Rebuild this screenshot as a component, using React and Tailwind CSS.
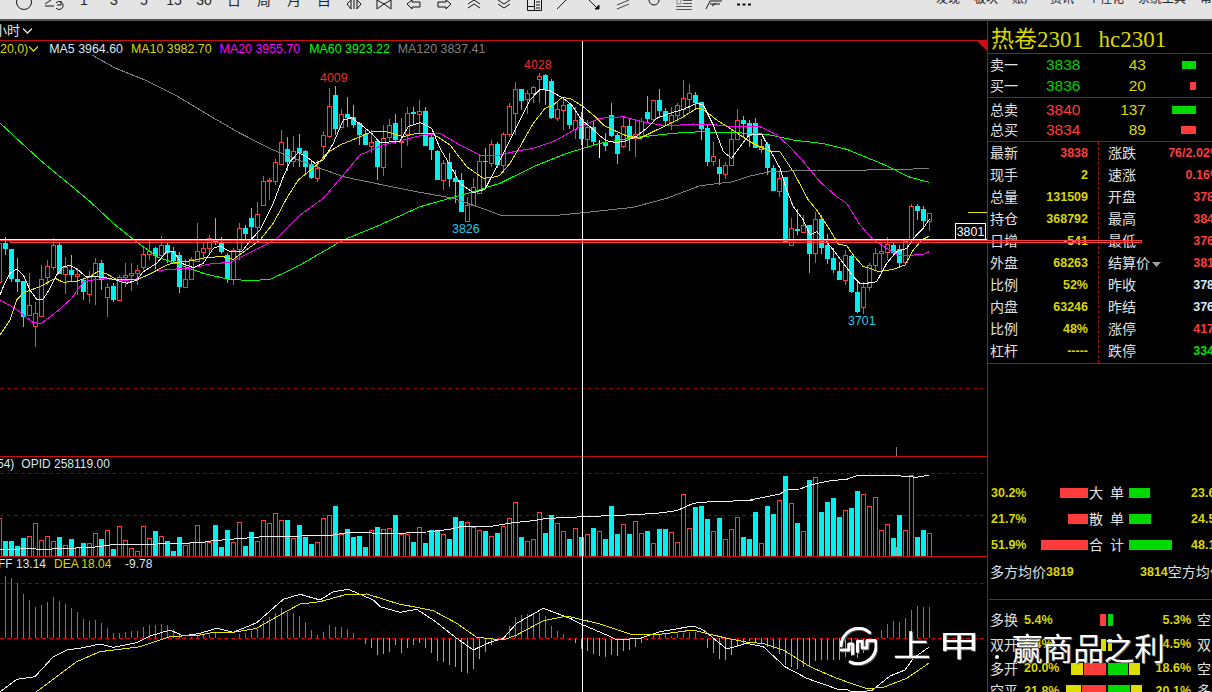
import React from "react";

const RED = "#ff3c3c";
const CY = "#00f0f0";
const conv = (ox, oy, a) => a.map(([x, y]) => [ox + x / 3, oy + y / 3]);
const pts = (a) => a.map(([x, y]) => x.toFixed(1) + "," + y.toFixed(1)).join(" ");

const candleRows = (start, oy, rows) =>
  rows.map((r, k) => ({ i: start + k, t: r[0], hi: Math.round(oy + r[1] / 3), top: Math.round(oy + r[2] / 3), bot: Math.round(oy + r[3] / 3), lo: Math.round(oy + r[4] / 3) }));

const candles = [
  ...candleRows(-1, 200, [["r",120,130,245,245],["c",112,130,148,165],["c",147,147,237,245],["c",175,237,245,275],["c",243,243,350,380],["r",220,316,345,345],["r",305,340,378,440],["r",195,238,347,347],["r",180,199,230,255],["r",115,136,200,210],["c",128,135,222,222],["r",170,200,222,282],["c",165,210,225,245],["r",205,222,228,285],["c",235,240,275,300],["r",212,232,281,310],["r",175,190,228,315],["c",180,189,240,270],["r",250,262,290,352],["c",250,258,300,306],["r",225,232,300,300],["r",190,226,232,260],["r",190,220,225,272],["r",195,211,220,255],["r",140,162,200,210],["r",122,153,163,180],["c",140,144,168,208],["r",108,136,165,178],["c",125,135,158,188],["c",140,153,183,190],["c",155,165,261,278],["r",178,238,261,261],["r",170,176,238,238],["r",70,154,183,183],["r",125,145,155,180],["r",105,115,143,165],["c",55,122,125,135],["c",112,125,155,162],["c",160,165,237,248],["r",145,150,237,255],["r",70,85,148,180]]),
  ...candleRows(40, 70, [["c",465,473,492,510],["c",415,445,472,510],["r",395,433,470,510],["r",318,333,404,404],["r",323,330,334,390],["r",268,276,332,345],["r",180,217,281,281],["c",200,237,275,303],["r",198,244,272,290],["c",192,234,248,290],["c",240,243,290,310],["c",270,283,325,327],["r",270,293,323,335],["r",182,195,227,268],["r",55,108,197,203],["c",48,75,178,195],["r",118,133,171,175],["c",82,132,143,170],["c",105,141,164,175],["c",155,158,194,225],["c",180,192,224,225],["r",180,217,227,250],["c",210,213,290,330],["r",165,203,292,318],["r",148,165,200,215],["c",132,159,210,222],["r",145,212,216,295],["r",110,130,192,228],["c",110,126,131,165],["r",90,124,131,190],["c",110,124,228,228],["c",195,200,240,270],["c",240,243,330,330],["r",270,280,330,360],["c",250,276,327,350],["c",300,324,335,400],["c",310,331,425,425],["r",380,404,452,455],["r",325,350,404,404],["r",255,274,368,372],["c",235,273,277,350],["r",210,222,278,290],["c",215,222,285,295]]),
  ...candleRows(83, 70, [["r",185,193,285,310],["r",100,108,193,200],["r",37,58,128,195],["c",57,57,92,120],["r",60,70,86,132],["r",48,52,68,100],["r",10,19,26,100],["c",12,15,60,105],["c",28,33,144,146],["r",95,118,143,152],["r",82,106,119,180],["c",100,102,164,176],["r",110,151,177,207],["c",125,148,207,225],["r",150,171,208,230],["c",150,172,217,225],["w",210,216,218,265],["c",190,218,227,243],["c",100,136,197,200],["c",190,196,251,282],["r",140,169,228,235],["c",145,169,204,242],["r",150,193,204,260],["r",145,152,197,209],["c",78,126,148,155],["r",90,91,148,155],["c",57,91,123,145],["c",115,124,152,165],["r",110,136,156,180],["r",100,104,135,155],["r",30,85,118,145],["r",42,70,86,130],["c",65,75,99,115],["c",95,97,176,210],["c",165,175,275,288],["r",215,259,272,288],["c",268,291,312,345],["r",275,286,311,326],["r",180,208,284,284],["r",118,151,208,210],["c",138,150,162,200],["c",150,159,197,230]]),
  ...candleRows(125, 100, [["c",55,70,144,145],["o",118,139,146,160],["c",125,132,204,225],["c",195,204,273,273],["r",210,235,272,290],["c",232,232,425,428],["r",355,385,434,438],["c",328,388,392,405],["r",345,376,395,395],["c",375,375,461,520],["r",335,357,460,488],["c",345,357,444,462],["c",402,435,476,492],["c",445,474,510,520],["c",487,513,540,540],["r",450,466,540,555],["c",465,468,576,580],["c",545,576,636,640],["r",545,562,622,642],["r",490,496,560,572],["r",445,460,494,510],["r",430,454,460,515],["r",410,433,455,480],["c",425,435,458,465],["c",435,448,488,505],["r",420,422,487,495],["r",312,319,420,420],["c",312,319,332,360],["c",318,327,362,385],["r",338,338,362,392]]),
];

const lines = {
  white: [...conv(0,200,[[0,285],[10,260],[30,220],[50,207],[70,225],[90,270],[110,298],[130,297],[150,265],[170,225],[190,200],[210,196],[235,210],[255,228],[310,232],[340,238],[380,250],[410,240],[430,215],[470,190],[500,155],[520,155],[545,190],[580,203],[610,190],[640,145],[660,138],[690,155],[725,155]]),
    ...conv(240,70,[[32,510],[60,480],[100,400],[130,320],[150,275],[175,248],[200,260],[225,280],[250,270],[280,220],[310,150],[335,143],[370,170],[395,190],[420,218],[460,215],[480,213],[505,170],[540,158],[575,175],[600,235],[630,285],[660,340],[700,368],[735,358],[770,290]]),
    ...conv(500,70,[[0,270],[30,210],[60,150],[90,90],[120,58],[150,62],[190,85],[215,105],[245,150],[270,170],[300,198],[320,212],[350,218],[380,212],[410,198],[440,175],[470,145],[510,130],[550,118],[590,100],[610,105],[640,165],[670,245],[695,265],[720,230]]),
    ...conv(750,100,[[0,102],[35,102],[60,150],[90,205],[110,270],[130,320],[160,360],[180,405],[200,395],[225,420],[250,450],[280,490],[310,530],[330,550],[350,550],[380,545],[410,490],[440,455],[470,445],[495,410],[520,385],[538,358]])],
  yellow: [...conv(0,200,[[0,405],[30,360],[50,300],[70,278],[120,260],[165,235],[190,247],[230,244],[270,230],[295,213],[320,222],[350,238],[415,238],[450,222],[500,195],[530,187],[575,182],[620,172],[670,170],[700,178]]),
    ...conv(240,70,[[60,510],[100,460],[140,385],[175,330],[230,285],[260,250],[300,225],[360,200],[395,185],[435,184],[490,200],[530,190],[580,192],[630,225],[680,290],[730,325],[770,320]]),
    ...conv(500,70,[[0,315],[30,280],[60,230],[100,160],[135,115],[160,105],[185,83],[210,85],[250,110],[280,135],[310,165],[340,180],[380,198],[420,205],[450,190],[500,165],[550,140],[590,115],[610,118],[650,150],[690,175]]),
    ...conv(750,100,[[0,125],[30,140],[60,155],[90,155],[130,215],[175,300],[200,330],[240,390],[265,432],[290,437],[310,465],[340,500],[360,505],[385,515],[430,508],[465,495],[490,450],[515,420],[538,408]])],
  magenta: [...conv(0,200,[[0,300],[45,325],[100,368],[125,370],[170,335],[215,295],[250,245],[310,235],[370,243],[420,235],[465,213],[510,208],[570,205],[640,190],[690,188]]),
    ...conv(240,70,[[105,510],[180,435],[250,385],[310,315],[360,255],[430,225],[490,210],[550,195],[600,190],[660,225],[720,255]]),
    ...conv(500,70,[[0,255],[50,243],[100,235],[160,215],[240,170],[300,145],[370,140],[440,158],[500,168],[580,162],[650,165],[700,170]]),
    ...conv(750,100,[[0,78],[30,80],[80,105],[120,140],[160,185],[210,245],[260,290],[290,310],[330,375],[370,420],[410,445],[450,468],[520,463],[538,455]])],
  green: [[0,123],[40,160],...conv(0,200,[[265,0],[340,70],[400,118],[470,170],[540,195],[610,220],[680,237],[750,242],[810,238],[850,220],[900,195]]),
    ...conv(240,70,[[310,510],[420,465],[540,410],[700,365]]),
    ...conv(500,70,[[0,340],[100,290],[200,250],[300,220],[400,203],[520,190],[600,185],[700,188]]),
    ...conv(750,100,[[0,100],[50,103],[130,120],[220,131],[290,148],[400,193],[480,232],[538,247]])],
  gray: [[92,55],[115,68],[145,80],[175,95],[217,120],...conv(240,70,[[0,190],[100,240],[200,280],[310,320],[430,345],[530,365],[640,385],[740,420]]),
    ...conv(500,70,[[0,435],[180,435],[250,428],[400,412],[500,385],[600,347],[700,335]]),
    ...conv(750,100,[[0,228],[60,215],[200,210],[350,210],[470,208],[538,205]])],
};

const vol = [["r",205],["c",273],["c",273],["c",288],["c",264],["r",258],["r",220],["r",270],["r",258],["r",273],["c",261],["r",286],["c",267],["r",291],["c",279],["r",279],["r",250],["c",267],["r",240],["c",297],["r",228],["r",270],["r",294],["r",303],["r",228],["r",264],["c",243],["r",258],["c",273],["c",303],["c",261],["r",285],["r",276],["r",225],["r",277],["r",277],["c",225],["c",291],["c",240],["r",276],["r",216],["c",288],["c",246],["r",273],["r",210],["r",219],["r",189],["r",210],["c",210],["r",264],["c",225],["c",261],["c",282],["r",276],["r",204],["r",195],["c",168],["r",252],["c",237],["c",261],["c",258],["c",291],["r",240],["c",231],["r",237],["r",234],["c",195],
  ["r",252],["r",252],["c",276],["r",232],["c",279],["c",240],["c",240],["r",252],["c",267],["c",201],["c",213],["r",216],["r",232],["r",240],["c",243],["r",258],["c",249],["r",228],["r",204],["r",156],["c",261],["r",273],["r",267],["r",186],["c",249],["c",195],["r",219],["r",243],["c",267],["r",234],["c",261],["r",252],["c",234],["r",243],["c",267],["c",168],["c",252],["r",222],["c",252],["r",213],["r",249],["c",243],["r",279],["c",237],["c",237],["r",246],["r",276],["r",132],["r",234],["c",171],["c",168],["c",207],["r",243],["c",204],["r",267],["r",237],["r",201],["c",261],["c",267],
  ["c",186],["r",279],["c",168],["c",192],["r",150],["c",78],["r",159],["c",219],["r",243],["c",90],["r",81],["c",186],["c",156],["c",144],["c",201],["r",180],["c",174],["c",123],["r",132],["r",168],["r",141],["r",240],["r",222],["c",264],["c",195],["r",240],["r",75],["c",261],["c",240],["r",249]];

const macdY = [378,384,400,432,450,471,465,456,441,453,462,474,486,507,513,510,519,534,549,549,546,543,543,531,525,525,522,525,537,549,560,560,555,555,555,550,565,568,565,552,549,543,537,513,501,489,474,486,489,498,516,540,555,546,525,531,531,537,549,565,582,594,615,612,606,585,
  609,594,585,579,594,609,633,636,645,651,666,669,657,627,606,585,568,565,528,501,495,492,489,489,498,528,543,552,570,579,597,603,612,618,621,615,618,603,600,591,579,570,555,552,552,558,552,548,545,545,563,594,609,627,630,615,591,582,573,
  576,580,590,597,612,645,651,657,651,651,633,630,630,630,630,620,618,624,608,585,570,540,522,513,516,504,480,468,471,471];

const volLine = [...conv(0,450,[[0,300],[80,296],[135,298],[280,292],[330,285],[470,282],[600,278],[640,272],[740,264],[790,260],[900,258],[1000,255],[1040,248],[1190,250]]),
  ...conv(400,450,[[0,250],[80,246],[150,238],[180,230],[280,228],[340,218],[400,212],[430,207],[480,203],[700,194],[770,190],[830,182],[880,160],[920,156],[1000,153],[1060,150]]),
  ...conv(750,450,[[0,150],[50,140],[90,132],[110,118],[150,117],[180,105],[240,92],[290,88],[320,77],[440,77],[500,82],[536,76]])];
const diff = [...conv(0,450,[[0,726],[50,688],[105,680],[160,620],[200,600],[240,595],[300,582],[340,592],[410,578],[450,558],[510,540],[550,558],[600,550],[650,535],[700,547],[770,518],[850,448],[900,433],[960,450],[1000,425],[1045,418],[1120,450],[1140,470]]),
  ...conv(400,450,[[0,487],[50,478],[100,510],[170,565],[220,600],[270,577],[310,565],[350,520],[430,475],[470,490],[510,505],[550,525],[620,555],[650,570],[720,565],[780,545],[880,528],[910,540],[980,597],[1040,580]]),
  ...conv(750,450,[[0,582],[40,590],[105,650],[170,685],[270,720],[290,718],[305,726],[365,722],[420,678],[465,660],[490,625],[536,592]])];
const dea = [...conv(0,450,[[108,726],[170,680],[230,635],[300,605],[420,590],[510,560],[600,555],[640,547],[700,547],[770,535],[830,500],[900,462],[960,455],[1040,433],[1100,432]]),
  ...conv(400,450,[[0,463],[50,472],[100,482],[170,520],[230,562],[310,570],[350,555],[430,512],[500,498],[600,522],[700,555],[780,553],[880,540],[980,565]]),
  ...conv(750,450,[[0,578],[40,580],[100,600],[180,650],[260,685],[350,716],[400,712],[470,685],[536,640]])];

const Dash = ({ y }) => <line x1="0" x2="987" y1={y} y2={y} stroke="#8c0000" strokeDasharray="4 3" shapeRendering="crispEdges" />;

function MainChart() {
  return (
    <svg className="block w-[987px] h-[415px]" viewBox="0 41 987 415">
      <g shapeRendering="crispEdges">
        <Dash y={388.5} />
        {candles.map((c) => {
          const x = 5.5 + 6 * c.i;
          if (c.t === "w") return <line key={c.i} x1={x} x2={x} y1={c.hi} y2={c.lo} stroke="#fff" />;
          const col = c.t === "c" ? CY : c.t === "o" ? "#ff8a00" : RED;
          return (
            <g key={c.i}>
              <line x1={x} x2={x} y1={c.hi} y2={c.lo} stroke={col} />
              {c.t === "c" ? (
                <rect x={x - 2.5} y={c.top} width="5" height={Math.max(1, c.bot - c.top)} fill={col} />
              ) : (
                <rect x={x - 2} y={c.top + 0.5} width="4" height={Math.max(1, c.bot - c.top)} fill="#000" stroke={col} />
              )}
            </g>
          );
        })}
      </g>
      <g fill="none" strokeWidth="1" shapeRendering="crispEdges">
        <polyline points={pts(lines.gray)} stroke="#808080" />
        <polyline points={pts(lines.green)} stroke="#00ff00" />
        <polyline points={pts(lines.magenta)} stroke="#ff00ff" />
        <polyline points={pts(lines.yellow)} stroke="#e6e600" />
        <polyline points={pts(lines.white)} stroke="#f0f0f0" />
      </g>
      <line x1="968" x2="987" y1="212.5" y2="212.5" stroke="#e6e600" shapeRendering="crispEdges" />
      <polygon points="977,41 987,41 987,51" fill="#c81010" />
      <line x1="896.5" x2="896.5" y1="447" y2="456" stroke="#808080" shapeRendering="crispEdges" />
    </svg>
  );
}

function VolChart() {
  const b = 556;
  return (
    <svg className="block w-[987px] h-[99px]" viewBox="0 457 987 99">
      <g shapeRendering="crispEdges">
        <Dash y={473.5} />
        <Dash y={515.5} />
        {vol.map((v, k) => {
          const x = 5.5 + 6 * (k - 1);
          const top = Math.round(450 + v[1] / 3);
          return v[0] === "c" ? (
            <rect key={k} x={x - 2.5} y={top} width="5" height={b - top} fill={CY} />
          ) : (
            <rect key={k} x={x - 2} y={top + 0.5} width="4" height={b - top} fill="#000" stroke={RED} />
          );
        })}
        <line x1="896.5" x2="896.5" y1="547" y2="556" stroke="#a0a0a0" />
      </g>
      <polyline points={pts(volLine)} fill="none" stroke="#f0f0f0" strokeWidth="1" shapeRendering="crispEdges" />
    </svg>
  );
}

function MacdChart() {
  const z = 638;
  return (
    <svg className="block w-[987px] h-[135px]" viewBox="0 557 987 135">
      <g shapeRendering="crispEdges">
        <Dash y={583.5} />
        {macdY.map((Y, k) => {
          const x = 5.5 + 6 * k;
          const y = Math.round(450 + Y / 3);
          const up = y <= z;
          return <line key={k} x1={x} x2={x} y1={z} y2={y} stroke={up ? RED : "#00e6f0"} />;
        })}
        <line x1="0" x2="987" y1={z + 0.5} y2={z + 0.5} stroke="#e00000" strokeDasharray="4 3" />
      </g>
      <polyline points={pts(diff)} fill="none" stroke="#f0f0f0" strokeWidth="1" shapeRendering="crispEdges" />
      <polyline points={pts(dea)} fill="none" stroke="#e6e600" strokeWidth="1" shapeRendering="crispEdges" />
    </svg>
  );
}

const Ico = ({ children }) => (
  <svg width="24" height="19" viewBox="0 0 24 19" fill="none" stroke="#111" strokeWidth="1">{children}</svg>
);
const T = ({ c }) => <span className="block -mt-[9px] text-[14px] leading-[19px] text-[#222]">{c}</span>;

const tools = [
  <Ico><path d="M13 0V5H16" /></Ico>,
  <Ico><circle cx="12" cy="2" r="7.5" /></Ico>,
  <Ico><path d="M3 4L9 0M3 6H12M14 3A4 4 0 1 1 14 8M19 1V5H15" /></Ico>,
  <T c="1" />, <T c="3" />, <T c="5" />, <T c="15" />, <T c="30" />, <T c="日" />, <T c="周" />, <T c="月" />, <T c="目" />,
  <Ico><path d="M9 0L5 4L9 9V0ZM15 0L19 4L15 9V0ZM12 0V9" /></Ico>,
  <Ico><path d="M5 0V9L12 4L19 9V0L12 4L5 0Z" /></Ico>,
  <Ico><path d="M5 4L10 0V2H18V7H10V9L5 4Z" /></Ico>,
  <Ico><path d="M19 4L14 0V2H6V7H14V9L19 4Z" /></Ico>,
  <Ico><path d="M6 4L12 0L18 4M6 8L12 4L18 8" /></Ico>,
  <Ico><path d="M6 0L12 4L18 0M6 4L12 8L18 4" /></Ico>,
  <Ico><path d="M5.5 0V10.5H19.5V0M12.5 0V10M5.5 6.5H12M14 2H18M14 5H18M14 8H18" /></Ico>,
  <Ico><path d="M5 9L14 0" /></Ico>,
  <Ico><path d="M7 0L15 8" /><path d="M13 9H17V5Z" fill="#111" /></Ico>,
  <Ico><path d="M5 5L17 0M5 9L17 4" stroke="#444" /></Ico>,
  <Ico><path d="M7 0A5 5 0 0 0 17 0" /></Ico>,
  <Ico><path d="M4 6.5H20M4 9.5H20M11 3.5H20M11 0.5H20" stroke="#555" /><path d="M9 0V4H5V0" stroke="#888" /></Ico>,
  <Ico><path d="M4 9L8 1H20M8 4H18M10 6L14 3" /></Ico>,
  <Ico><path d="M5 4.5H8M10.5 4.5H13.5M16 4.5H19" strokeWidth="2" /></Ico>,
];

const menu = ["发现", "板块", "账户", "资讯", "个性化", "系统工具", "帮助"];

function Toolbar() {
  return (
    <div className="h-[21px] flex-none bg-[#e4e4e4] border-b-2 border-[#555555] flex justify-between overflow-hidden">
      <div className="flex -ml-[21px]">
        {tools.map((t, k) => (
          <div key={k} className="w-[30px] flex justify-center items-start">{t}</div>
        ))}
      </div>
      <div className="flex gap-[14px] -mt-[9px] -mr-[12px] text-[12px] leading-[17px] text-[#222] items-start">
        {menu.map((m) => <span key={m}>{m}</span>)}
      </div>
    </div>
  );
}

const Y = "text-[#d8d800]";
const Lab = ({ children, className = "" }) => <span className={"text-[14px] leading-none text-[#e0e0e0] " + className}>{children}</span>;

function Book({ label, price, priceCol, qty, bar, barCol, h }) {
  return (
    <div className={"flex items-center relative " + h}>
      <div className="w-[58px] pl-[2px] flex-none"><Lab>{label}</Lab></div>
      <div className="w-[36px] flex-none text-[15.5px] leading-none" style={{ color: priceCol }}>{price}</div>
      <div className={"w-[64px] flex-none text-right text-[15.5px] leading-none " + Y}>{qty}</div>
      <div className="w-[50px] flex-none flex justify-end">
        <div className="h-[8px]" style={{ width: bar, background: barCol }} />
      </div>
    </div>
  );
}

const R = "text-[#ff3c3c]";
const W = "text-[#d8e8f4]";
const leftRows = [["最新","3838",R],["现手","2",Y],["总量","131509",Y],["持仓","368792",Y],["日增","-541",Y],["外盘","68263",Y],["比例","52%",Y],["内盘","63246",Y],["比例","48%",Y],["杠杆","-----",Y]];
const rightRows = [["涨跌","76/2.02%",R],["速涨","0.16%",R],["开盘","3782",R],["最高","3842",R],["最低","3762",R],["结算价","3812",R],["昨收","3782",W],["昨结","3762",W],["涨停","4172",R],["跌停","3342","text-[#00e000]"]];

function Stat({ label, value, col, extra }) {
  return (
    <div className="h-[22px] flex items-center justify-between">
      <div className="flex items-center">
        <Lab>{label}</Lab>
        {extra}
      </div>
      <span className={"font-bold text-[12.5px] leading-none " + col}>{value}</span>
    </div>
  );
}

function Flow({ l, lw, lbl, rw, r }) {
  return (
    <div className="h-[26px] flex items-center">
      <div className={"w-[50px] pl-[2px] flex-none font-bold text-[12.5px] " + Y}>{l}</div>
      <div className="w-[49px] flex-none flex justify-end"><div className="h-[10px] bg-[#ff3c3c]" style={{ width: lw }} /></div>
      <div className="w-[41px] flex-none pl-[1px] pr-[5px] flex justify-between"><Lab>{lbl[0]}</Lab><Lab>{lbl[1]}</Lab></div>
      <div className="w-[62px] flex-none"><div className="h-[10px] bg-[#00d900]" style={{ width: rw }} /></div>
      <div className={"font-bold text-[12.5px] flex-none " + Y}>{r}</div>
    </div>
  );
}

const Bars = ({ segs, className }) => (
  <div className={"flex gap-[1px] h-[12px] flex-none w-[43px] " + className}>
    {segs.map((s, k) => <div key={k} className="h-full flex-none" style={{ width: s[0], background: s[1] }} />)}
  </div>
);

function Ratio({ a, pa, left, right, pb, b, h }) {
  return (
    <div className={"flex items-center " + h}>
      <div className="w-[36px] pl-[2px] flex-none"><Lab>{a}</Lab></div>
      <div className={"w-[40px] flex-none font-bold text-[12.5px] whitespace-nowrap " + Y}>{pa}</div>
      <Bars segs={left} className="justify-end pr-[1px]" />
      <Bars segs={right} className="pl-[1px]" />
      <div className={"w-[41px] flex-none text-right font-bold text-[12.5px] " + Y}>{pb}</div>
      <div className="pl-[6px] flex-none"><Lab>{b}</Lab></div>
    </div>
  );
}

const Rd = "#ff3c3c", Gn = "#00d900", Yl = "#dddd00";

function Panel() {
  return (
    <div className="w-[225px] flex-none border-l border-[#b81010] overflow-hidden">
      <div className="h-[33px] border-b border-[#a81010] flex items-center pl-[3px] pt-[5px] whitespace-pre font-['Liberation_Serif','Noto_Sans_CJK_SC',serif] text-[23px] leading-none text-[#d8d800]">
        <span className="mr-[4px]">热卷2301  </span><span>hc2301</span>
      </div>
      <div className="h-[44px] border-b border-[#a81010]">
        <Book label="卖一" price="3838" priceCol="#00d000" qty="43" bar={14} barCol={Gn} h="h-[22px]" />
        <Book label="买一" price="3836" priceCol="#00d000" qty="20" bar={6} barCol={Rd} h="h-[20px]" />
      </div>
      <div className="h-[44px] border-b border-[#a81010]">
        <Book label="总卖" price="3840" priceCol="#ff3c3c" qty="137" bar={24} barCol={Gn} h="h-[23px]" />
        <Book label="总买" price="3834" priceCol="#ff3c3c" qty="89" bar={15} barCol={Rd} h="h-[18px]" />
      </div>
      <div className="h-[222px] border-b border-[#a81010] flex">
        <div className="w-[111px] flex-none pl-[2px] pr-[10px] border-r border-dashed border-[#a81010]">
          {leftRows.map((r, k) => <Stat key={k} label={r[0]} value={r[1]} col={r[2]} />)}
        </div>
        <div className="w-[122px] flex-none pl-[9px]">
          {rightRows.map((r, k) => (
            <Stat key={k} label={r[0]} value={r[1]} col={r[2]}
              extra={k === 5 ? <svg width="9" height="5" viewBox="0 0 9 5" className="ml-[2px] mt-[3px]"><path d="M0 0H9L4.5 5Z" fill="#a0a0a0" /></svg> : null} />
          ))}
        </div>
      </div>
      <div className="h-[236px] border-b border-[#a81010] ml-[1px] pt-[116px]">
        <Flow l="30.2%" lw={28} lbl={["大", "单"]} rw={21} r="23.6%" />
        <Flow l="21.7%" lw={20} lbl={["散", "单"]} rw={22} r="24.5%" />
        <Flow l="51.9%" lw={47} lbl={["合", "计"]} rw={43} r="48.1%" />
        <div className="h-[26px] flex items-center pl-[1px] pt-[2px] whitespace-nowrap">
          <Lab>多方均价</Lab>
          <span className={"w-[94px] flex-none font-bold text-[12.5px] " + Y}>3819</span>
          <span className={"font-bold text-[12.5px] " + Y}>3814</span>
          <Lab>空方均价</Lab>
        </div>
      </div>
      <div className="pt-[8px]">
        <Ratio a="多换" pa="5.4%" left={[[6, Rd]]} right={[[5, Gn]]} pb="5.3%" b="空" h="h-[24px]" />
        <Ratio a="双开" pa="6.4%" left={[[5, Yl]]} right={[[4, Yl]]} pb="4.5%" b="双" h="h-[25px]" />
        <Ratio a="多开" pa="20.0%" left={[[12, Yl], [22, Rd]]} right={[[20, Gn], [11, Yl]]} pb="18.6%" b="空" h="h-[23px]" />
        <Ratio a="空平" pa="21.8%" left={[[15, Yl], [24, Rd]]} right={[[22, Gn], [11, Yl]]} pb="20.1%" b="多" h="h-[22px]" />
      </div>
    </div>
  );
}

function Logo() {
  return (
    <svg width="37" height="38" viewBox="0 0 110 112" fill="none" stroke="#fff" strokeWidth="9" strokeLinecap="round" strokeLinejoin="round">
      <path d="M3 55A54 54 0 0 1 55 3C68 3 78 7 88 16" />
      <path d="M107 42V62A54 54 0 0 1 30 103" />
      <path d="M3 68H26V50H38V78" />
      <path d="M52 72V42H66V62H80V40H104" />
    </svg>
  );
}

export default function App() {
  return (
    <div className="relative w-[1212px] h-[692px] overflow-hidden bg-black flex flex-col font-['Liberation_Sans','Noto_Sans_CJK_SC',sans-serif]">
      <Toolbar />
      <div className="flex flex-1 min-h-0">
        <div className="w-[987px] flex-none flex flex-col relative">
          <div className="h-[20px] flex-none border-b border-[#c81010] flex items-center text-[13px] text-[#e8e8e8] -ml-[6px]">
            <span>小时</span>
            <svg width="9" height="6" viewBox="0 0 9 6" className="ml-[3px]" fill="none" stroke="#e8e8e8" strokeWidth="1.3"><path d="M0 0.5L4.5 5L9 0.5" /></svg>
          </div>
          <div className="relative h-[416px] flex-none border-b border-[#c81010]">
            <div className="absolute left-0 top-0 h-[16px] flex items-center whitespace-nowrap text-[12.4px] leading-none">
              <span className="text-[#d8d800]">20,0)</span>
              <svg width="9" height="6" viewBox="0 0 9 6" className="ml-[1px] mr-[11px]" fill="none" stroke="#d8d800" strokeWidth="1.3"><path d="M0 0.5L4.5 5L9 0.5" /></svg>
              <span className="text-[#d8e8f4] mr-[8px]">MA5 3964.60</span>
              <span className="text-[#d8d800] mr-[8px]">MA10 3982.70</span>
              <span className="text-[#ff00ff] mr-[9px]">MA20 3955.70</span>
              <span className="text-[#00ff00] mr-[8px]">MA60 3923.22</span>
              <span className="text-[#808080]">MA120 3837.41</span>
            </div>
            <MainChart />
            <span className="absolute left-[320px] top-[31px] text-[12.4px] leading-none text-[#e83030]">4009</span>
            <span className="absolute left-[524px] top-[18px] text-[12.4px] leading-none text-[#e83030]">4028</span>
            <span className="absolute left-[452px] top-[182px] text-[12.4px] leading-none text-[#20c8e8]">3826</span>
            <span className="absolute left-[848px] top-[274px] text-[12.4px] leading-none text-[#20c8e8]">3701</span>
            <div className="absolute left-[955px] top-[182px] w-[31px] h-[18px] border border-white bg-black flex items-center justify-center text-[12.4px] leading-none text-white">3801</div>
          </div>
          <div className="relative h-[100px] flex-none border-b border-[#c81010]">
            <div className="absolute left-0 top-0 h-[14px] flex items-center text-[12px] leading-none text-[#d8e8f4] whitespace-nowrap">
              <span className="-ml-[3px] mr-[7px]">54)</span>
              <span>OPID 258119.00</span>
            </div>
            <VolChart />
          </div>
          <div className="relative flex-1 min-h-0">
            <div className="absolute left-0 top-0 h-[14px] flex items-center text-[12px] leading-none whitespace-nowrap">
              <span className="text-[#d8e8f4] w-[54px] -ml-[2px] pr-[2px]">FF 13.14</span>
              <span className="text-[#d8d800] w-[71px] ml-[2px]">DEA 18.04</span>
              <span className="text-[#d8e8f4]">-9.78</span>
            </div>
            <MacdChart />
          </div>
          <div className="absolute left-[582px] top-[20px] bottom-0 w-px bg-white" />
        </div>
        <Panel />
      </div>

      <div className="absolute left-0 top-[239px] w-[987px] h-px bg-white" />
      <div className="absolute left-0 top-[240px] w-[1142px] h-px bg-[#ff3c3c]" />
      <div className="absolute left-[10px] top-[240px] w-[1132px] h-[3px] border border-[#ff3c3c]" />

      <div className="absolute left-[840px] top-[627px] [filter:drop-shadow(1px_1px_0_#555)]"><Logo /></div>
      <span className="absolute left-[893px] top-[624px] text-[38px] leading-[44px] text-white scale-y-[0.78] [text-shadow:1px_1px_0_#666]">上</span>
      <span className="absolute left-[940px] top-[624px] text-[38px] leading-[44px] text-white scale-x-[1.12] scale-y-[0.78] [text-shadow:1px_1px_0_#666]">甲</span>
      <div className="absolute left-[995px] top-[655px] w-[4px] h-[4px] rounded-full bg-white" />
      <span className="absolute left-[1012px] top-[630px] text-[30.6px] leading-[38px] whitespace-nowrap text-white [text-shadow:1px_1px_0_#666]">赢商品之利</span>
    </div>
  );
}
